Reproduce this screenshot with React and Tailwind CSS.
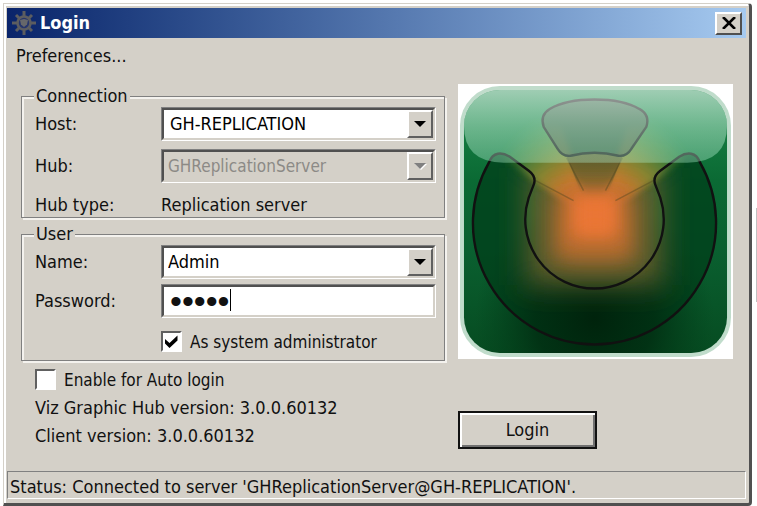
import React from "react";

const sunkenOuter = "border border-t-[#808080] border-l-[#808080] border-r-white border-b-white";
const sunkenInner =
  "rounded-none border-2 border-t-[#505050] border-l-[#505050] border-r-[#d4d0c8] border-b-[#d4d0c8] outline-none";

function ArrowBox({ disabled }) {
  return (
    <span className="pointer-events-none absolute top-[2px] right-[2px] bottom-[2px] flex w-[26px] items-center justify-center border-2 border-t-white border-l-white border-r-[#606060] border-b-[#606060] bg-[#d4d0c8]">
      <svg width="13" height="7" viewBox="0 0 13 7">
        {disabled && <path d="M1 1h12L7 7z" fill="#fff" />}
        <path d="M0 0h12L6 6z" fill={disabled ? "#808080" : "#000"} />
      </svg>
    </span>
  );
}

function Combo({ id, value, disabled, inset = "pl-1" }) {
  return (
    <div className={`relative h-[34px] ${sunkenOuter}`}>
      <select
        id={id}
        disabled={disabled}
        defaultValue={value}
        className={`${inset} block h-full w-full appearance-none opacity-100 ${sunkenInner} ${
          disabled ? "bg-[#d4d0c8] text-[17px] text-[#8c8a86]" : "bg-white text-black"
        }`}
      >
        <option>{value}</option>
      </select>
      <ArrowBox disabled={disabled} />
    </div>
  );
}

function Check({ id, label, checked }) {
  return (
    <div className="flex items-center gap-2 text-[17px]">
      <span className="relative block size-[21px]">
        <input
          id={id}
          type="checkbox"
          defaultChecked={checked}
          className="peer block size-full appearance-none border-2 border-t-[#606060] border-l-[#606060] border-r-white border-b-white bg-white outline-none"
        />
        <svg
          viewBox="0 0 21 21"
          className="pointer-events-none absolute inset-0 hidden size-full peer-checked:block"
        >
          <path d="M4 8l4.500 4L16.500 4.500v5L8.500 17 4 12.500z" fill="#000" />
        </svg>
      </span>
      <label htmlFor={id}>{label}</label>
    </div>
  );
}

function Group({ title, children, className }) {
  return (
    <fieldset
      className={`border border-[#808080] pr-2 pl-3 shadow-[inset_2px_2px_0_#f4f2ee,2px_2px_0_#f4f2ee] ${className}`}
    >
      <legend className="bg-[#d4d0c8] px-[2px] leading-5">{title}</legend>
      {children}
    </fieldset>
  );
}

function GearIcon() {
  return (
    <svg width="24" height="24" viewBox="0 0 24 24">
      <g stroke="#5c5d60" strokeWidth="3">
        <path d="M12 0v6M12 18v6M0 12h6M18 12h6M4 4l4 4M16 16l4 4M20 4l-4 4M8 16l-4 4" />
      </g>
      <circle cx="12" cy="12" r="6.5" fill="#26356c" stroke="#5c5d60" strokeWidth="2.6" />
      <path d="M8 9l4-1 4 1-1 4.500-3 2.500-3-2.500z" fill="#66676a" />
    </svg>
  );
}

const ring =
  "M31 79A122 122 0 1 0 243 79C239 68 230 68 222 73L203 87Q195 93 198 101L203 114A69.5 69.5 0 1 1 71 114L76 101Q79 93 71 87L52 73C44 68 35 68 31 79Z";

function HubLogo() {
  return (
    <svg viewBox="0 0 276 276" className="block w-full bg-white" role="img" aria-label="Graphic Hub">
      <defs>
        <linearGradient id="base" x1="0" y1="0" x2="0" y2="1">
          <stop offset="0" stopColor="#1c8a4c" />
          <stop offset="0.35" stopColor="#0b6a34" />
          <stop offset="0.6" stopColor="#0a6030" />
          <stop offset="1" stopColor="#064a20" />
        </linearGradient>
        <radialGradient id="dark" cx="137" cy="235" r="120" gradientUnits="userSpaceOnUse">
          <stop offset="0" stopColor="#00230c" />
          <stop offset="0.5" stopColor="#002a10" stopOpacity="0.75" />
          <stop offset="1" stopColor="#003c18" stopOpacity="0" />
        </radialGradient>
        <radialGradient id="beam" cx="137" cy="130" r="112" gradientUnits="userSpaceOnUse">
          <stop offset="0" stopColor="#f07830" />
          <stop offset="0.35" stopColor="#c87c30" />
          <stop offset="0.6" stopColor="#8c8a32" stopOpacity="0.85" />
          <stop offset="1" stopColor="#609040" stopOpacity="0" />
        </radialGradient>
        <linearGradient id="wedge" x1="0" y1="70" x2="0" y2="118" gradientUnits="userSpaceOnUse">
          <stop offset="0" stopColor="#5c5c2c" />
          <stop offset="0.5" stopColor="#7a642c" stopOpacity="0.9" />
          <stop offset="1" stopColor="#c07030" stopOpacity="0" />
        </linearGradient>
        <linearGradient id="gloss" x1="0" y1="0" x2="0" y2="1">
          <stop offset="0" stopColor="#fff" stopOpacity="0.58" />
          <stop offset="0.5" stopColor="#dcffec" stopOpacity="0.44" />
          <stop offset="1" stopColor="#b4f4d4" stopOpacity="0.36" />
        </linearGradient>
        <filter id="b3" x="-50%" y="-50%" width="200%" height="200%">
          <feGaussianBlur stdDeviation="3" />
        </filter>
        <filter id="b8" x="-50%" y="-50%" width="200%" height="200%">
          <feGaussianBlur stdDeviation="8" />
        </filter>
        <filter id="b14" x="-50%" y="-50%" width="200%" height="200%">
          <feGaussianBlur stdDeviation="14" />
        </filter>
        <clipPath id="face">
          <rect x="6" y="6" width="264" height="264" rx="36" />
        </clipPath>
      </defs>
      <rect x="2" y="2" width="272" height="272" rx="40" fill="#c0dccb" />
      <g clipPath="url(#face)">
        <rect width="276" height="276" fill="url(#base)" />
        <path d={ring} fill="#003d19" fillOpacity="0.75" />
        <rect width="276" height="276" fill="url(#dark)" />
        <rect x="68" y="84" width="138" height="118" fill="#5e5c2a" fillOpacity="0.95" filter="url(#b14)" />
        <path
          d="M137 138L78 98 40 70 56 30 104 44 126 108zM137 138L196 98 234 70 218 30 170 44 148 108z"
          fill="url(#beam)"
          filter="url(#b3)"
        />
        <path d="M108 70h58L147 118h-20z" fill="url(#wedge)" />
        <rect x="98" y="108" width="78" height="70" fill="#b06a2e" filter="url(#b14)" />
        <rect x="102" y="108" width="70" height="64" fill="#bc6c2e" fillOpacity="0.7" filter="url(#b8)" />
        <rect x="114" y="112" width="46" height="42" fill="#e87634" filter="url(#b8)" />
        <rect x="124" y="116" width="28" height="30" fill="#ea7634" filter="url(#b8)" />
        <path
          d="M78 97L116 117M196 97L158 117M109 74L126 107M165 74L148 107"
          stroke="#4a4420"
          strokeOpacity="0.4"
          strokeWidth="1.5"
        />
        <g stroke="#111" strokeWidth="2.4" strokeLinejoin="round">
          <path fill="none" d={ring} />
          <path
            fill="#3c4c3c"
            fillOpacity="0.65"
            d="M137 15.500C158 15.500 172 19 182 25Q193 31 189 43L174 65Q169 73 161 72Q149 69 137 69Q125 69 113 72Q105 73 100 65L86 43Q82 31 92 25C102 19 116 15.500 137 15.500Z"
          />
        </g>
        <path d="M6 6h264v36Q270 79 230 79H46Q6 79 6 42z" fill="url(#gloss)" />
      </g>
    </svg>
  );
}

export default function App() {
  return (
    <div className="flex min-h-screen bg-white pt-[3px] pl-[3px] font-['DejaVu_Sans_Condensed','DejaVu_Sans',sans-serif] text-[18px] leading-5 text-[#111]">
      <main className="flex flex-1 flex-col rounded-tr-sm rounded-br-sm border border-t-[#d4d0c8] border-r-[3px] border-b-[3px] border-l-[#d4d0c8] border-r-[#505050] border-b-[#505050] bg-[#d4d0c8] shadow-[inset_2px_2px_0_#fff]">
        <header className="mx-[3px] mt-1 flex h-[30px] items-center gap-1 bg-linear-to-r from-[#0a246a] to-[#a6caf0] pr-1 pl-[5px] text-white">
          <GearIcon />
          <h1 className="flex-1 font-bold">Login</h1>
          <button
            aria-label="Close"
            className="flex h-[23px] w-[27px] items-center justify-center border-2 border-t-white border-l-white border-r-[#505050] border-b-[#505050] bg-[#d4d0c8]"
          >
            <svg width="14" height="12" viewBox="0 0 14 12" stroke="#000" strokeWidth="2.6">
              <path d="M1 0l12 12M13 0L1 12" />
            </svg>
          </button>
        </header>

        <nav className="px-3 pt-2">
          <button className="block">Preferences...</button>
        </nav>

        <div className="flex flex-1 gap-[13px] pt-[18px] pr-4 pl-[17px]">
          <div className="min-w-0 flex-1 pt-[2px]">
            <Group title="Connection" className="h-[132px]">
              <div className="grid grid-cols-[126px_1fr] items-center gap-y-2 pt-px pl-px">
                <label htmlFor="host">Host:</label>
                <Combo id="host" value="GH-REPLICATION" inset="pl-[6px]" />
                <label htmlFor="hub">Hub:</label>
                <Combo id="hub" value="GHReplicationServer" disabled />
                <span>Hub type:</span>
                <span className="py-1">Replication server</span>
              </div>
            </Group>
            <Group title="User" className="mt-[6px] h-[137px]">
              <div className="grid grid-cols-[126px_1fr] items-center gap-y-[5px] pt-px pl-px">
                <label htmlFor="name">Name:</label>
                <Combo id="name" value="Admin" />
                <label htmlFor="password">Password:</label>
                <div className={`relative h-[34px] ${sunkenOuter}`}>
                  <input
                    id="password"
                    type="password"
                    defaultValue="admin"
                    className={`block h-full w-full bg-white pl-[6px] font-['Liberation_Sans',sans-serif] text-[34px] ${sunkenInner}`}
                  />
                  <span className="absolute top-1 left-[68px] h-[22px] w-px bg-black" />
                </div>
                <span />
                <div className="pt-2">
                  <Check id="admin" label="As system administrator" checked />
                </div>
              </div>
            </Group>
            <div className="flex flex-col gap-2 pt-2 pl-[14px]">
              <Check id="auto" label="Enable for Auto login" />
              <p>Viz Graphic Hub version: 3.0.0.60132</p>
              <p>Client version: 3.0.0.60132</p>
            </div>
          </div>
          <div className="w-[275px]">
            <HubLogo />
            <button className="mt-[52px] h-[38px] w-[139px] border-2 border-[#111] bg-[#d4d0c8] shadow-[inset_2px_2px_0_#fff,inset_-2px_-2px_0_#707070]">
              Login
            </button>
          </div>
        </div>

        <footer className="mx-[3px] mb-1 border border-t-[#808080] border-r-white border-b-white border-l-[#808080] px-[2px] pt-[5px] pb-px whitespace-nowrap">
          Status: Connected to server 'GHReplicationServer@GH-REPLICATION'.
        </footer>
      </main>
      <aside className="mt-[205px] ml-1 h-[94px] w-px bg-[#c0c0c0]" />
    </div>
  );
}
